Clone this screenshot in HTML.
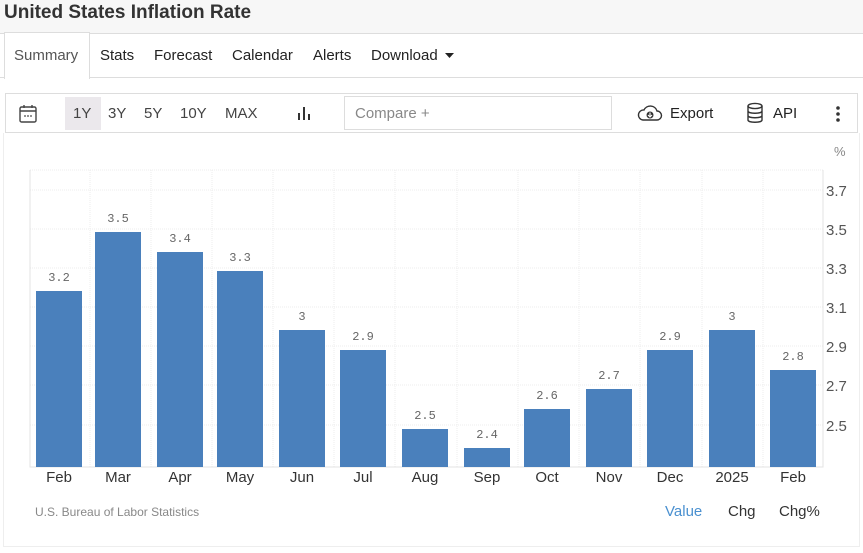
<!DOCTYPE html>
<html><head><meta charset="utf-8"><style>
body{margin:0;width:863px;height:553px;background:#fff;font-family:"Liberation Sans",Arial,sans-serif;position:relative;overflow:hidden}
.title{position:absolute;left:0;top:0;width:863px;height:33px;background:#f7f7f7;border-bottom:1px solid #ddd}
.title span{position:absolute;left:4px;top:2px;font-size:19px;font-weight:bold;color:#333}
.tabs{position:absolute;left:0;top:33px;width:863px;height:44px;border-bottom:1px solid #ddd}
.tab{position:absolute;top:14px;font-size:15px;color:#222}
.sel{position:absolute;left:4px;top:-1px;width:84px;height:46px;background:#fff;border:1px solid #ddd;border-bottom:none}
.tb{position:absolute;left:5px;top:93px;width:853px;height:40px;border:1px solid #ddd;box-sizing:border-box}
.t{position:absolute;font-size:15px;color:#444;top:11px}
.panel{position:absolute;left:3px;top:133px;width:857px;height:414px;border:1px solid #eee;border-top:none;box-sizing:border-box}
</style></head><body>
<div class="title"><span>United States Inflation Rate</span></div>
<div class="tabs">
<div class="sel"></div>
<div class="tab" style="left:14px;color:#555">Summary</div>
<div class="tab" style="left:100px">Stats</div>
<div class="tab" style="left:154px">Forecast</div>
<div class="tab" style="left:232px">Calendar</div>
<div class="tab" style="left:313px">Alerts</div>
<div class="tab" style="left:371px">Download</div>
<svg style="position:absolute;left:445px;top:20px" width="9" height="6"><path d="M0 0H9L4.5 5Z" fill="#222"/></svg>
</div>
<div class="panel"></div>
<div class="tb">
<svg style="position:absolute;left:12px;top:10px" width="20" height="20" viewBox="0 0 20 20"><rect x="2" y="3" width="16" height="15" rx="1.5" fill="none" stroke="#444" stroke-width="1.4"/><path d="M2 7H18M6 1V4M14 1V4" stroke="#444" stroke-width="1.4"/><circle cx="7" cy="12" r=".9" fill="#444"/><circle cx="10" cy="12" r=".9" fill="#444"/><circle cx="13" cy="12" r=".9" fill="#444"/></svg>
<div style="position:absolute;left:59px;top:3px;width:36px;height:33px;background:#ebe8ec"></div>
<div class="t" style="left:67px">1Y</div>
<div class="t" style="left:102px">3Y</div>
<div class="t" style="left:138px">5Y</div>
<div class="t" style="left:174px">10Y</div>
<div class="t" style="left:219px">MAX</div>
<svg style="position:absolute;left:291px;top:11px" width="16" height="16"><path d="M2 8V15M7 2V15M12 9V15" stroke="#333" stroke-width="2"/></svg>
<div style="position:absolute;left:338px;top:2px;width:268px;height:34px;border:1px solid #ddd;box-sizing:border-box"></div>
<div class="t" style="left:349px;color:#888">Compare +</div>
<svg style="position:absolute;left:631px;top:9px" width="26" height="20" viewBox="0 0 26 20"><path d="M6 17H20A4.5 4.5 0 0 0 20 8A7 7 0 0 0 7 7A5 5 0 0 0 6 17Z" fill="none" stroke="#333" stroke-width="1.4"/><circle cx="13" cy="12" r="3.5" fill="#333"/><path d="M13 9.5V14M11 12L13 14 15 12" stroke="#fff" stroke-width="1.1" fill="none"/></svg>
<div class="t" style="left:664px;color:#222">Export</div>
<svg style="position:absolute;left:740px;top:8px" width="18" height="22" viewBox="0 0 18 22"><ellipse cx="9" cy="4" rx="7" ry="2.6" fill="none" stroke="#333" stroke-width="1.4"/><path d="M2 4V18C2 21 16 21 16 18V4M2 9C2 12 16 12 16 9M2 13.5C2 16.5 16 16.5 16 13.5" fill="none" stroke="#333" stroke-width="1.4"/></svg>
<div class="t" style="left:767px;color:#222">API</div>
<svg style="position:absolute;left:829px;top:11px" width="6" height="18"><circle cx="3" cy="3" r="1.8" fill="#333"/><circle cx="3" cy="9" r="1.8" fill="#333"/><circle cx="3" cy="15" r="1.8" fill="#333"/></svg>
</div>
<svg style="position:absolute;left:0;top:0" width="863" height="553" font-family="Liberation Sans,Arial,sans-serif">
<g stroke="#ececec" stroke-dasharray="1,1">
<path d="M30 190H823M30 229H823M30 268H823M30 307H823M30 346H823M30 385H823M30 425H823M30 170H823"/>
<path d="M90 170V467M151 170V467M212 170V467M273 170V467M334 170V467M395 170V467M457 170V467M518 170V467M579 170V467M640 170V467M702 170V467M763 170V467"/>
</g>
<path d="M30 170V467H823V170" fill="none" stroke="#e3e3e3"/>
<g fill="#4a80bc">
<rect x="36" y="291" width="46" height="176"/>
<rect x="95" y="232" width="46" height="235"/>
<rect x="157" y="252" width="46" height="215"/>
<rect x="217" y="271" width="46" height="196"/>
<rect x="279" y="330" width="46" height="137"/>
<rect x="340" y="350" width="46" height="117"/>
<rect x="402" y="429" width="46" height="38"/>
<rect x="464" y="448" width="46" height="19"/>
<rect x="524" y="409" width="46" height="58"/>
<rect x="586" y="389" width="46" height="78"/>
<rect x="647" y="350" width="46" height="117"/>
<rect x="709" y="330" width="46" height="137"/>
<rect x="770" y="370" width="46" height="97"/>
</g>
<g font-size="12" fill="#666" text-anchor="middle" font-family="Liberation Mono,monospace">
<text x="59" y="281">3.2</text><text x="118" y="222">3.5</text><text x="180" y="242">3.4</text><text x="240" y="261">3.3</text><text x="302" y="320">3</text><text x="363" y="340">2.9</text><text x="425" y="419">2.5</text><text x="487" y="438">2.4</text><text x="547" y="399">2.6</text><text x="609" y="379">2.7</text><text x="670" y="340">2.9</text><text x="732" y="320">3</text><text x="793" y="360">2.8</text>
</g>
<g font-size="15" fill="#333" text-anchor="middle">
<text x="59" y="482">Feb</text><text x="118" y="482">Mar</text><text x="180" y="482">Apr</text><text x="240" y="482">May</text><text x="302" y="482">Jun</text><text x="363" y="482">Jul</text><text x="425" y="482">Aug</text><text x="487" y="482">Sep</text><text x="547" y="482">Oct</text><text x="609" y="482">Nov</text><text x="670" y="482">Dec</text><text x="732" y="482">2025</text><text x="793" y="482">Feb</text>
</g>
<g font-size="15" fill="#555">
<text x="826" y="196">3.7</text><text x="826" y="235">3.5</text><text x="826" y="274">3.3</text><text x="826" y="313">3.1</text><text x="826" y="352">2.9</text><text x="826" y="391">2.7</text><text x="826" y="431">2.5</text>
</g>
<text x="834" y="156" font-size="13" fill="#888">%</text>
<text x="35" y="516" font-size="12" fill="#888">U.S. Bureau of Labor Statistics</text>
<text x="665" y="516" font-size="15" fill="#4a90d0">Value</text>
<text x="728" y="516" font-size="15" fill="#333">Chg</text>
<text x="779" y="516" font-size="15" fill="#333">Chg%</text>
</svg>
</body></html>
